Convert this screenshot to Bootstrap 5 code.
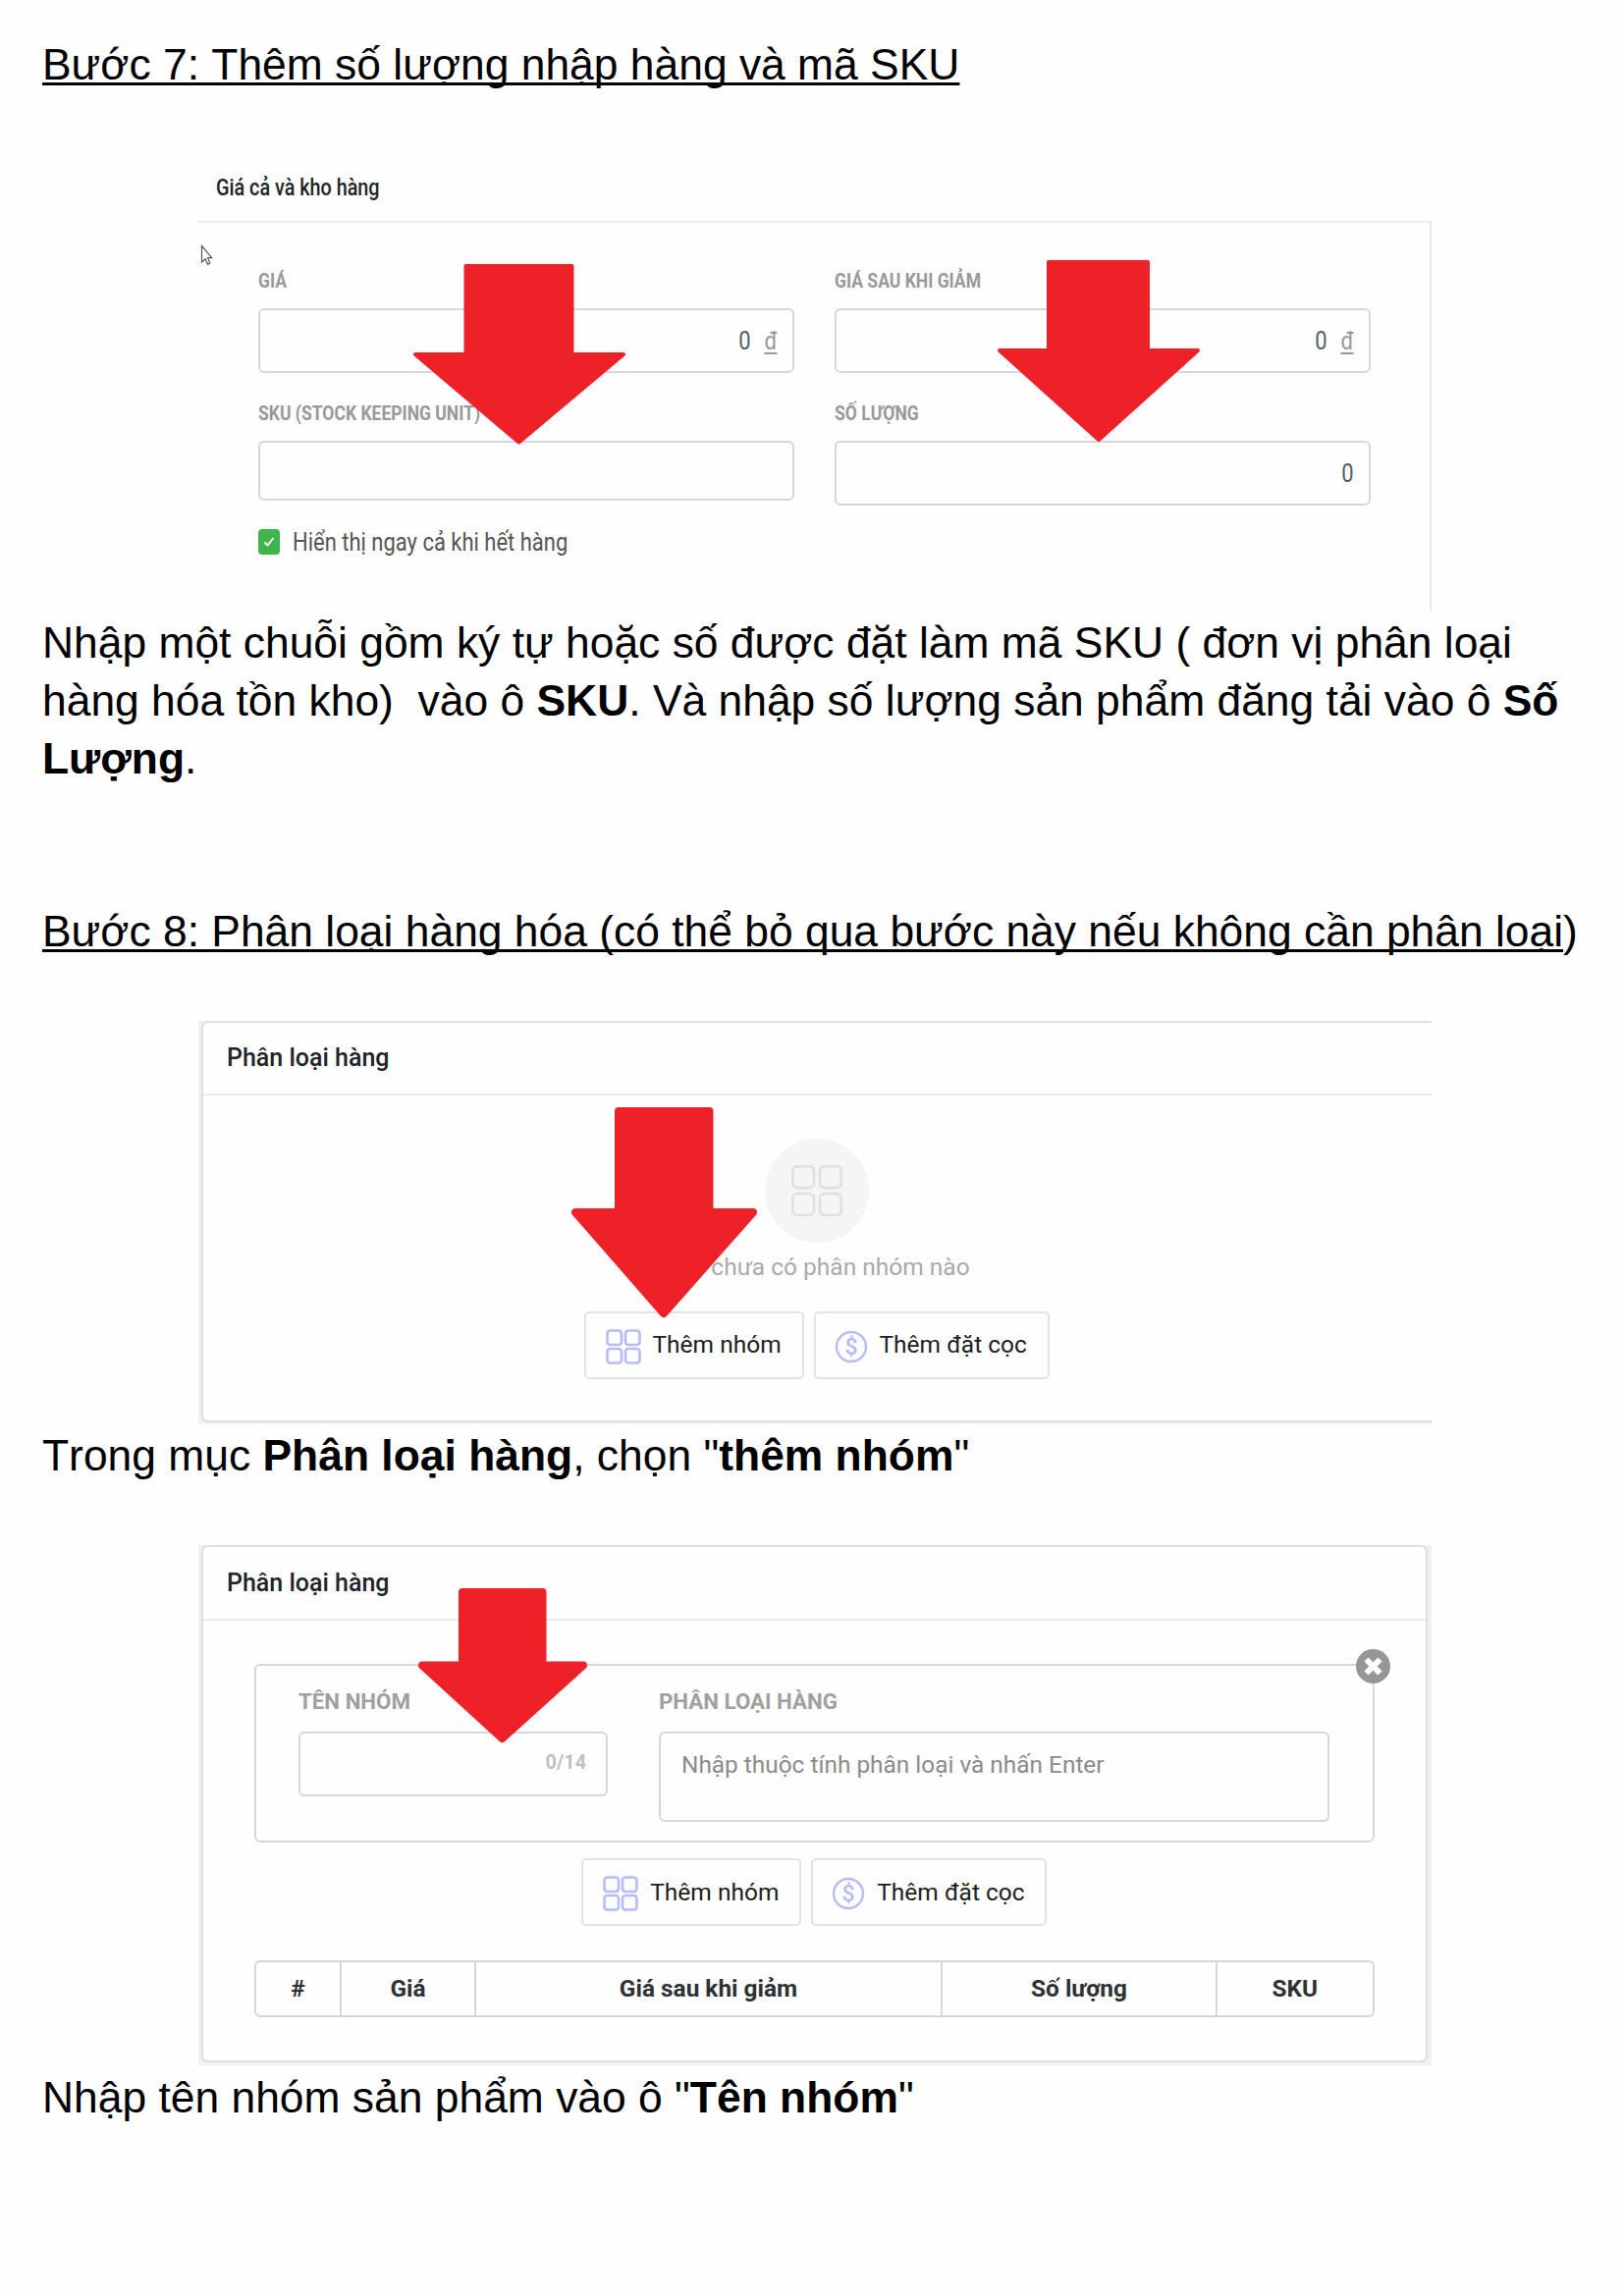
<!DOCTYPE html>
<html lang="vi">
<head>
<meta charset="utf-8">
<title>Hướng dẫn đăng sản phẩm</title>
<link href="https://cdn.jsdelivr.net/npm/bootstrap@5.3.0/dist/css/bootstrap.min.css" rel="stylesheet">
<style>
body{background:#fefefe;color:#000;font-family:"Liberation Sans",Arial,sans-serif;font-size:44.4px;line-height:58.85px;font-kerning:none}
.guide{width:1654px;height:2339px;padding:37px 0 0 43px;overflow:hidden}
.guide p,.guide h1,.guide h2{font-size:inherit;line-height:inherit;font-weight:400;margin:0;white-space:nowrap}
.guide .after-shot{margin-top:4px}
.guide .after-variants{margin-top:3px}
.guide h2{margin-top:117.45px}
.guide u{text-decoration-thickness:3px;text-underline-offset:3px;text-decoration-skip-ink:none}
.shot{margin:61.15px 0 0 159px;width:1256px;font-family:Roboto,sans-serif;font-size:24.5px;line-height:30px;color:#212529;font-kerning:auto}
.squeeze{display:inline-block;transform:scaleX(var(--k,.845));transform-origin:left;white-space:nowrap}
.squeeze.from-end{transform-origin:right}
.arrow-mark{position:absolute;left:0;top:0;width:100%;height:100%;fill:#ee2129;stroke:#ee2129;stroke-linejoin:round}
.cursor-mark{position:absolute;left:2px;top:92px}
.caption-text{font-size:20px;font-weight:700;color:#999;line-height:30px;--k:.876}
.field-box{border:2px solid #d3d8dd;border-radius:6px;background:#fefefe}

/* price and stock panel */
.stock{height:465px}
.stock-head{height:70px;border-bottom:2px solid #e8ebf3;padding:19px 0 0 18px;font-size:24px;font-weight:500;--k:.824}
.stock-body{height:395px;border-right:2px solid #e6e8ee;padding:44px 0 0 61px;gap:41px}
.stock-col{width:546px}
.stock-col .field-box{height:66px;margin-top:13px;padding-right:15px;font-size:26px;color:#555e66}
.stock-col .field-box.short{height:61px}
.next-label{margin-top:26px}
.tick{width:22px;height:26px;background:#3fb549;border-radius:4px}
.tick-row{margin-top:29px;height:26px;gap:13px;font-size:26px;color:#555}
.dong{color:#999;margin-left:12px;text-decoration:underline;text-decoration-thickness:2px;text-underline-offset:3px}

/* variant panels */
.variants{background:#f0f0f1;padding-left:3px}
.empty-panel{height:411px}
.group-panel{height:530px}
.pane{background:#fefefe;border:2px solid #dedfe1;border-radius:7px}
.pane.cut-right{height:409px;border-right:0;border-radius:7px 0 0 7px}
.pane.whole{height:527px;width:1249px}
.pane-head{height:74px;border-bottom:2px solid #e9ebf6;font-weight:500;font-size:25px;padding:21px 0 0 24px}
.whole .pane-head{height:75px;padding-top:22px}
.empty-body{padding:44px 2px 0 0}
.empty-text{color:#aaa;margin:10px 0 30px;padding-left:49px}
.tool-pair{gap:10px}
.btn.tool{border:2px solid #e2e3e5;border-radius:5px;background:#fefefe;height:69px;width:224px;padding:0 0 0 20px;font:400 24.5px/30px Roboto,sans-serif;color:#212121;gap:12px}
.btn.tool.wide{width:240px;padding-left:19px}
.tool-icon{margin-top:3px;flex:none;color:#b4bdf6}
.group-body{padding:44px 52.5px 0 52px}
.group-box{height:182px;padding:21px 0 0 43px;gap:52px}
.group-box .caption-text{font-size:22.3px;color:#a0a0a0}
.group-box .field-box{margin-top:16px}
.name-field{width:315px;height:66px;padding:0 20px 2px 0;font-size:19.8px;font-weight:700;color:#c0c0c0}
.value-field{width:683px;height:92px;padding:17px 0 0 21px;font-size:24.4px;color:#8b8b8b}
.close-mark{position:absolute;right:-18px;top:-17px}
.tool-row{margin:16.5px 0 34.5px}
.price-cols{height:58.5px;font-size:24.4px;font-weight:700;color:#2d3236}
.price-cols>div+div{border-left:2px solid #d3d8dd}
.col-no{width:85px}.col-price{width:137px}.col-sale{width:475px}.col-qty{width:280px}
</style>
</head>
<body>
<svg width="0" height="0" class="position-absolute">
  <symbol id="grid-icon" viewBox="0 0 36 36"><g fill="none" stroke="currentColor" stroke-width="var(--sw,2.6)"><rect x="1.5" y="1.5" width="14.5" height="14.5" rx="3"/><rect x="20" y="1.5" width="14.5" height="14.5" rx="3"/><rect x="1.5" y="20" width="14.5" height="14.5" rx="3"/><rect x="20" y="20" width="14.5" height="14.5" rx="3"/></g></symbol>
</svg>
<main class="guide">
  <h1><u>Bước 7: Thêm số lượng nhập hàng và mã SKU</u></h1>

  <section class="shot stock position-relative">
    <div class="stock-head"><span class="squeeze">Giá cả và kho hàng</span></div>
    <div class="stock-body d-flex">
      <div class="stock-col">
        <div class="caption-text"><span class="squeeze">GIÁ</span></div>
        <div class="field-box d-flex align-items-center justify-content-end"><span class="squeeze from-end">0</span><span class="squeeze from-end dong">đ</span></div>
        <div class="caption-text next-label"><span class="squeeze">SKU (STOCK KEEPING UNIT)</span></div>
        <div class="field-box short"></div>
        <div class="tick-row d-flex align-items-center">
          <span class="tick d-flex align-items-center justify-content-center"><svg width="12" height="12" viewBox="0 0 12 12" fill="none" stroke="#fff" stroke-width="2"><path d="M1.5 6.5 4.5 9.5 10.5 2"/></svg></span>
          <span class="squeeze">Hiển thị ngay cả khi hết hàng</span>
        </div>
      </div>
      <div class="stock-col">
        <div class="caption-text"><span class="squeeze">GIÁ SAU KHI GIẢM</span></div>
        <div class="field-box d-flex align-items-center justify-content-end"><span class="squeeze from-end">0</span><span class="squeeze from-end dong">đ</span></div>
        <div class="caption-text next-label"><span class="squeeze">SỐ LƯỢNG</span></div>
        <div class="field-box d-flex align-items-center justify-content-end"><span class="squeeze from-end">0</span></div>
      </div>
    </div>
    <svg class="cursor-mark" width="13" height="22" viewBox="0 0 13 22" fill="#fff" stroke="#555" stroke-width="1.2"><path d="M1.5 1.5V18L5 14.8 7.6 20.3 9.8 19 7.6 13.7H11.8Z"/></svg>
    <svg class="arrow-mark" stroke-width="4"><path d="M272.5 114H380.5V204H433L326.5 293.5 221 204H272.5Z"/><path d="M866 110H967V200H1018L917 291 816 200H866Z"/></svg>
  </section>

  <p class="after-shot">Nhập một chuỗi gồm ký tự hoặc số được đặt làm mã SKU ( đơn vị phân loại<br>hàng hóa tồn kho)&nbsp; vào ô <b>SKU</b>. Và nhập số lượng sản phẩm đăng tải vào ô <b>Số<br>Lượng</b>.</p>

  <h2><u>Bước 8: Phân loại hàng hóa (có thể bỏ qua bước này nếu không cần phân loại</u>)</h2>

  <section class="shot variants empty-panel position-relative">
    <div class="pane cut-right">
      <div class="pane-head">Phân loại hàng</div>
      <div class="empty-body d-flex flex-column align-items-center">
        <svg width="106" height="106" viewBox="0 0 106 106" style="color:#dddfe1;--sw:1.7"><circle cx="53" cy="53" r="53" fill="#f4f5f7"/><use href="#grid-icon" x="26" y="26" width="54" height="54"/></svg>
        <div class="empty-text">chưa có phân nhóm nào</div>
        <div class="tool-pair d-flex">
          <button class="btn tool d-flex align-items-center"><svg class="tool-icon" width="36" height="36"><use href="#grid-icon"/></svg>Thêm nhóm</button>
          <button class="btn tool wide d-flex align-items-center"><svg class="tool-icon" width="34" height="34" viewBox="0 0 34 34"><circle cx="17" cy="17" r="15" fill="none" stroke="currentColor" stroke-width="2.4"/><text x="17" y="25" text-anchor="middle" font-size="23" font-weight="500" fill="currentColor">$</text></svg>Thêm đặt cọc</button>
        </div>
      </div>
    </div>
    <svg class="arrow-mark" stroke-width="8"><path d="M428 92H520.5V195H565L474 298 384 195H428Z"/></svg>
  </section>

  <p class="after-variants">Trong mục <b>Phân loại hàng</b>, chọn "<b>thêm nhóm</b>"</p>

  <section class="shot variants group-panel position-relative">
    <div class="pane whole">
      <div class="pane-head">Phân loại hàng</div>
      <div class="group-body">
        <div class="field-box group-box d-flex position-relative">
          <div>
            <div class="caption-text">TÊN NHÓM</div>
            <div class="field-box name-field d-flex align-items-center justify-content-end">0/14</div>
          </div>
          <div>
            <div class="caption-text">PHÂN LOẠI HÀNG</div>
            <div class="field-box value-field">Nhập thuộc tính phân loại và nhấn Enter</div>
          </div>
          <svg class="close-mark" width="35" height="35" viewBox="0 0 35 35"><circle cx="17.5" cy="17.5" r="17.5" fill="#969696"/><path d="M10.5 10.5l14 14M24.5 10.5l-14 14" stroke="#fff" stroke-width="6"/></svg>
        </div>
        <div class="tool-pair tool-row d-flex justify-content-center">
          <button class="btn tool d-flex align-items-center"><svg class="tool-icon" width="36" height="36"><use href="#grid-icon"/></svg>Thêm nhóm</button>
          <button class="btn tool wide d-flex align-items-center"><svg class="tool-icon" width="34" height="34" viewBox="0 0 34 34"><circle cx="17" cy="17" r="15" fill="none" stroke="currentColor" stroke-width="2.4"/><text x="17" y="25" text-anchor="middle" font-size="23" font-weight="500" fill="currentColor">$</text></svg>Thêm đặt cọc</button>
        </div>
        <div class="field-box price-cols d-flex align-items-stretch text-center">
          <div class="col-no d-flex align-items-center justify-content-center">#</div>
          <div class="col-price d-flex align-items-center justify-content-center">Giá</div>
          <div class="col-sale d-flex align-items-center justify-content-center">Giá sau khi giảm</div>
          <div class="col-qty d-flex align-items-center justify-content-center">Số lượng</div>
          <div class="flex-fill d-flex align-items-center justify-content-center">SKU</div>
        </div>
      </div>
    </div>
    <svg class="arrow-mark" stroke-width="8"><path d="M269 48H350.5V122.5H392L309.5 197 228 122.5H269Z"/></svg>
  </section>

  <p class="after-shot">Nhập tên nhóm sản phẩm vào ô "<b>Tên nhóm</b>"</p>
</main>
<script src="https://cdn.jsdelivr.net/npm/bootstrap@5.3.0/dist/js/bootstrap.bundle.min.js"></script>
</body>
</html>
